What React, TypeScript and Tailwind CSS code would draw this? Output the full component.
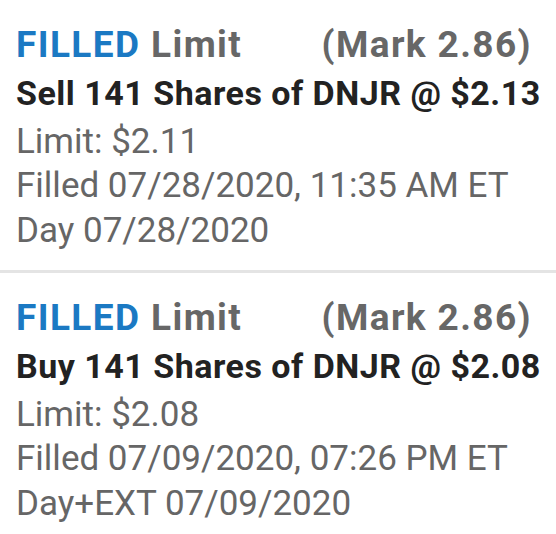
const orders = [
  {
    side: 'Sell',
    price: '$2.13',
    limit: '$2.11',
    filled: '07/28/2020, 11:35 AM ET',
    duration: 'Day 07/28/2020',
  },
  {
    side: 'Buy',
    price: '$2.08',
    limit: '$2.08',
    filled: '07/09/2020, 07:26 PM ET',
    duration: 'Day+EXT 07/09/2020',
  },
];

function OrderRow({ order }: { order: (typeof orders)[number] }) {
  return (
    <div className="pl-4 pr-[14px] pt-[22px] pb-[17px]">
      <div className="flex items-center justify-between pr-[10px] text-[37px] font-bold leading-[46px] tracking-[1.4px]">
        <span>
          <span className="text-[#1b79c3]">FILLED</span>{' '}
          <span className="text-[#676767]">Limit</span>
        </span>
        <span className="text-[#676767]">(Mark 2.86)</span>
      </div>
      <div className="text-[34px] font-bold leading-[50px] tracking-[0.5px] text-[#222222]">
        {order.side} 141 Shares of DNJR @ {order.price}
      </div>
      <div className="text-[35px] leading-[44px] text-[#666666]">
        <div className="pt-[2px]">Limit: {order.limit}</div>
        <div>Filled {order.filled}</div>
        <div className="pt-[1px]">{order.duration}</div>
      </div>
    </div>
  );
}

export default function App() {
  return (
    <div className="h-[534px] w-[556px] overflow-hidden bg-white font-['Roboto',sans-serif]">
      {orders.map((order, index) => (
        <div
          key={order.side}
          className={index === 0 ? 'border-b-[3px] border-[#e4e4e4]' : ''}
        >
          <OrderRow order={order} />
        </div>
      ))}
    </div>
  );
}
